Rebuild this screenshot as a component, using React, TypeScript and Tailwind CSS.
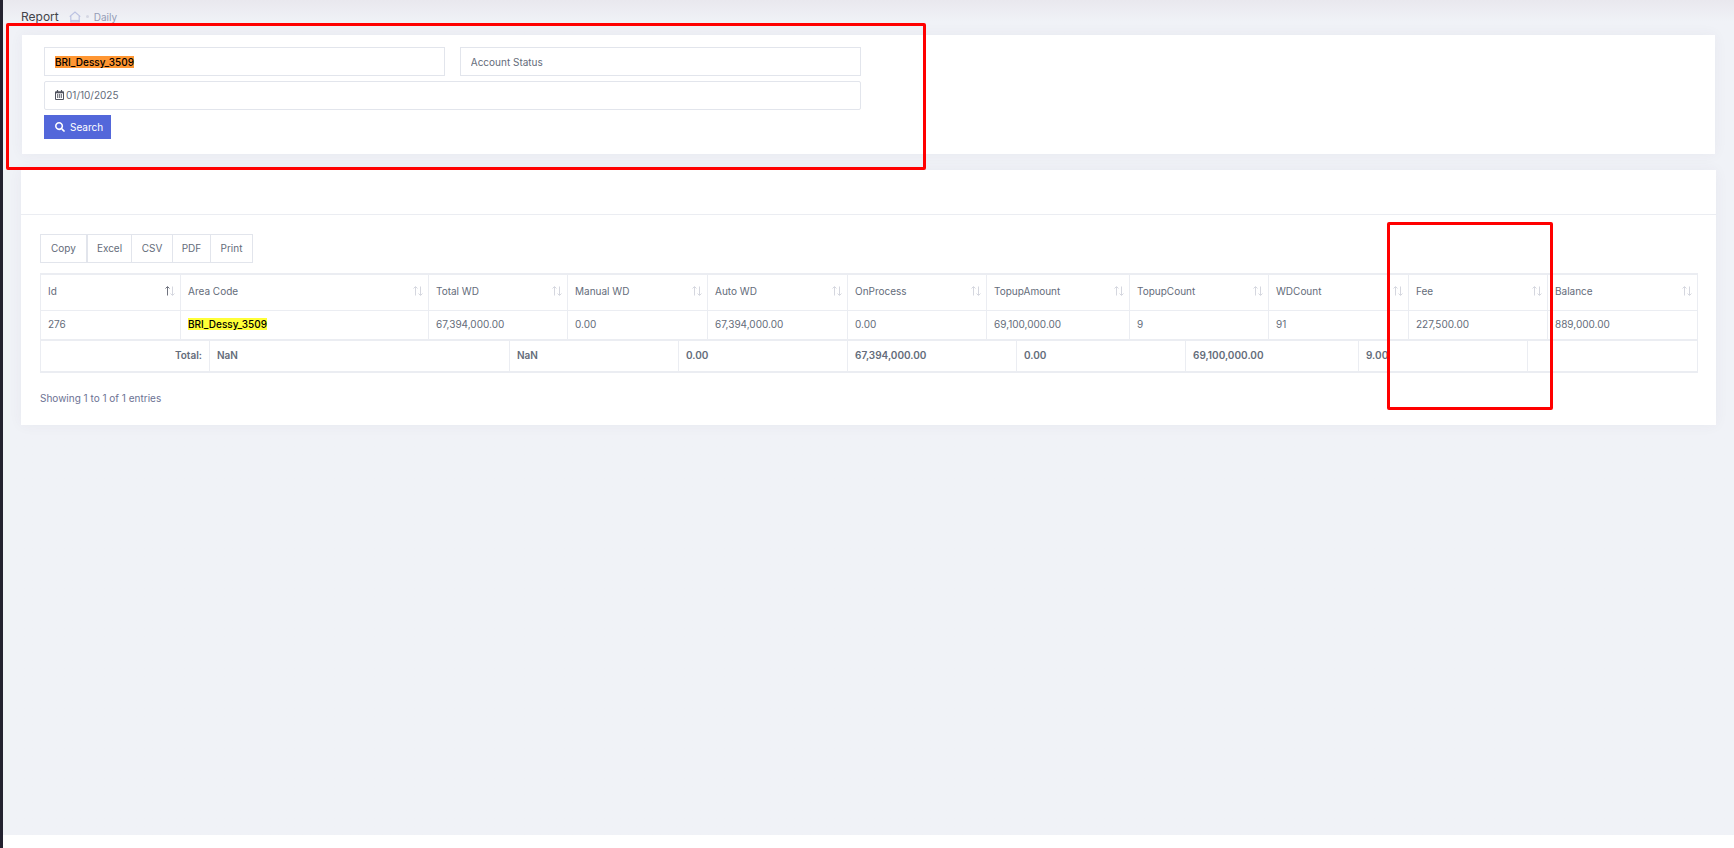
import React from 'react';
import { FaSearch } from 'react-icons/fa';

const EXPORT_BUTTONS = [
  { label: 'Copy', width: 'w-[48px]' },
  { label: 'Excel', width: 'w-[44px]' },
  { label: 'CSV', width: 'w-[41px]' },
  { label: 'PDF', width: 'w-[38px]' },
  { label: 'Print', width: 'w-[42px]' },
];

const COLUMNS = [
  { title: 'Id', value: '276', width: 'w-[140px]' },
  { title: 'Area Code', value: 'BRI_Dessy_3509', width: 'w-[248px]' },
  { title: 'Total WD', value: '67,394,000.00', width: 'w-[139px]' },
  { title: 'Manual WD', value: '0.00', width: 'w-[140px]' },
  { title: 'Auto WD', value: '67,394,000.00', width: 'w-[140px]' },
  { title: 'OnProcess', value: '0.00', width: 'w-[139px]' },
  { title: 'TopupAmount', value: '69,100,000.00', width: 'w-[143px]' },
  { title: 'TopupCount', value: '9', width: 'w-[139px]' },
  { title: 'WDCount', value: '91', width: 'w-[140px]' },
  { title: 'Fee', value: '227,500.00', width: 'w-[139px]' },
  { title: 'Balance', value: '889,000.00', width: 'w-[150px]' },
];

const TOTALS = [
  { value: 'NaN', width: 'w-[300px]' },
  { value: 'NaN', width: 'w-[169px]' },
  { value: '0.00', width: 'w-[169px]' },
  { value: '67,394,000.00', width: 'w-[169px]' },
  { value: '0.00', width: 'w-[169px]' },
  { value: '69,100,000.00', width: 'w-[173px]' },
  { value: '9.00', width: 'w-[169px]' },
  { value: '', width: 'w-[170px]' },
];

const HomeIcon: React.FC = () => (
  <svg width="12" height="12" viewBox="0 0 12 12" fill="none" stroke="#bcc2e2" strokeWidth="1.2">
    <path d="M.7 5.6 6 1l5.3 4.6M1.8 5v5.8h8.4V5" />
    <path d="M2 9.4h8" strokeWidth="1" />
  </svg>
);

const CalendarIcon: React.FC = () => (
  <svg width="9" height="10" viewBox="0 0 9 10" fill="none" stroke="#50535e">
    <path d="M.5 1.8h8v7.7h-8z" />
    <path d="M0 2.6h9" strokeWidth="1.4" />
    <path d="M2.5 0v2M6.5 0v2" strokeWidth="1.2" />
    <path d="M2 5h1.2M3.9 5h1.2M5.8 5H7M2 7h1.2M3.9 7h1.2M5.8 7H7" strokeWidth="1.3" />
  </svg>
);

const SortIcon: React.FC<{ active?: boolean }> = ({ active }) => (
  <svg width="10" height="10" viewBox="0 0 10 10" fill="none" strokeWidth="1">
    <path d="M2.5 9.5V1M.5 2.5l2-2 2 2" stroke={active ? '#6f727e' : '#d5d7df'} />
    <path d="M7.5.5V9M5.5 7.5l2 2 2-2" stroke="#d5d7df" />
  </svg>
);

const App: React.FC = () => {
  return (
    <div className="relative min-h-screen flex flex-col overflow-x-hidden border-l-3 border-[#242230] bg-[#f0f2f7] font-['Inter',sans-serif] text-[10px] leading-4 text-[#646c7a]">
      <main className="grow bg-linear-to-b from-[#e9e8ee] to-[#f0f2f7] to-[22px] pl-[18px] pr-[18px]">

        {/* Breadcrumb */}
        <header className="flex items-center h-[35px] pb-[2px]">
          <h1 className="text-[12px] text-[#434349]">Report</h1>
          <nav className="flex items-center ml-[10px] gap-[5px] text-[#959cb6]" aria-label="Breadcrumb">
            <a href="#home" aria-label="Home"><HomeIcon /></a>
            <span className="size-[3px] rounded-full bg-[#d5d7e3]"></span>
            <a href="#daily">Daily</a>
          </nav>
        </header>

        {/* Filters */}
        <section className="mx-px mb-4 bg-white px-[22px] pt-3 pb-[15px] shadow-[0_0_13px_0_rgba(82,63,105,0.05)]">
          <form className="w-1/2 pr-2 flex flex-col items-start gap-[5px]">
            <div className="w-full grid grid-cols-2 gap-[15px]">
              <button type="button" aria-haspopup="listbox" aria-label="Area code" className="h-[29px] border border-[#e2e5ec] px-[10px] text-left">
                <mark className="bg-[#ff9632] font-medium text-black">BRI_Dessy_3509</mark>
              </button>
              <select aria-label="Account status" className="h-[29px] appearance-none border border-[#e2e5ec] px-[10px]">
                <option>Account Status</option>
              </select>
            </div>
            <label className="w-full h-[29px] flex items-center gap-[2px] rounded-[2px] border border-[#e2e5ec] px-[10px] pb-[2px]">
              <CalendarIcon />
              <input type="text" aria-label="Date" defaultValue="01/10/2025" className="grow outline-none" />
            </label>
            <button type="button" className="h-6 w-[67px] flex items-center gap-[5px] bg-[#5367da] pl-[11px] text-white">
              <FaSearch size={10} /> Search
            </button>
          </form>
        </section>

        {/* Report table */}
        <section className="bg-white shadow-[0_0_13px_0_rgba(82,63,105,0.05)]">
          <div className="h-[45px] border-b border-[#ebedf2]"></div>
          <div className="px-[19px] pt-[19px] pb-[19px]">
            <div className="flex mb-[10px]">
              {EXPORT_BUTTONS.map((button) => (
                <button key={button.label} type="button" className={`${button.width} h-[29px] border border-l-0 first:border-x first:border-r-2 border-[#e2e5ec] pb-[2px] text-center`}>
                  {button.label}
                </button>
              ))}
            </div>

            <table className="w-full table-fixed border-collapse border-x border-y-2 border-[#ebedf2] text-left">
              <thead>
                <tr className="h-[36px]">
                  {COLUMNS.map((col, idx) => (
                    <th key={col.title} className={`${col.width} border border-[#ebedf2] pl-[7px] pr-[5px] pb-[2px] font-normal`}>
                      <div className="flex items-center justify-between">
                        {col.title}
                        <SortIcon active={idx === 0} />
                      </div>
                    </th>
                  ))}
                </tr>
              </thead>
              <tbody>
                <tr className="h-[30px]">
                  {COLUMNS.map((col, idx) => (
                    <td key={col.title} className="border border-[#ebedf2] px-[7px] pb-[2px]">
                      {idx === 1 ? <mark className="bg-[#ffff38] font-medium text-black">{col.value}</mark> : col.value}
                    </td>
                  ))}
                </tr>
              </tbody>
            </table>

            <table className="w-full table-fixed border-collapse border-x border-b-2 border-[#ebedf2] text-left font-semibold" aria-label="Totals">
              <tbody>
                <tr className="h-[31px]">
                  <th className="w-[169px] border-r border-[#ebedf2] px-[7px] pb-[2px] text-right font-semibold">Total:</th>
                  {TOTALS.map((total, idx) => (
                    <td key={idx} className={`${total.width} border-r border-[#ebedf2] px-[7px] pb-[2px]`}>{total.value}</td>
                  ))}
                </tr>
              </tbody>
            </table>

            <p className="mt-[17px] text-[#6c7293]">Showing 1 to 1 of 1 entries</p>
          </div>
        </section>
      </main>

      <footer className="h-[13px] bg-white"></footer>

      {/* Highlight frames over the filter form and the fee column */}
      <div className="pointer-events-none absolute left-[3px] top-[23px] w-[920px] h-[147px] rounded-[2px] border-3 border-[#ff0000]"></div>
      <div className="pointer-events-none absolute right-[181px] top-[222px] w-[166px] h-[188px] rounded-[2px] border-3 border-[#ff0000]"></div>
    </div>
  );
};

export default App;
